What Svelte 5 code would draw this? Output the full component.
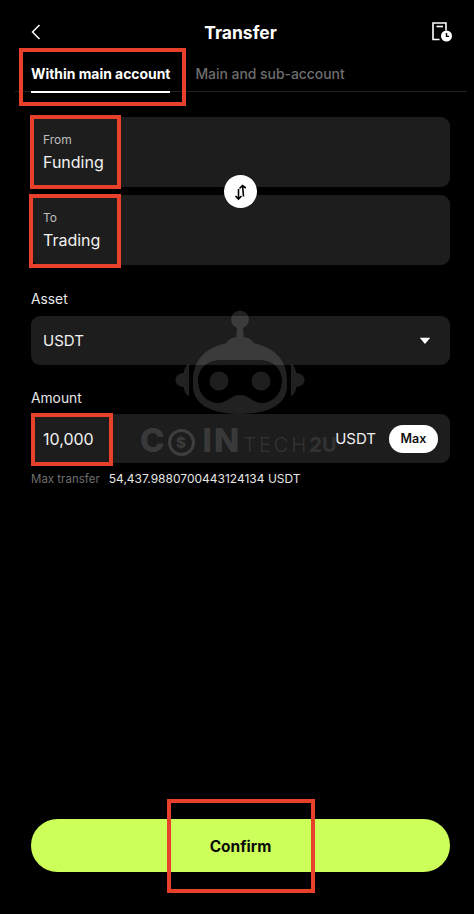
<script>
  let amount = '10,000';
  const maxTransfer = '54,437.9880700443124134 USDT';
</script>

<div class="page">
  <header class="topbar">
    <svg class="back" width="10" height="16" viewBox="0 0 10 16" fill="none"><path d="M8.500 1 1.500 8l7 7" stroke="#fff" stroke-width="1.500"/></svg>
    <h1>Transfer</h1>
    <svg class="history" width="22" height="22" viewBox="0 0 22 22" fill="none">
      <path d="M8.500 18.500H2V2h13v7.500" stroke="#fff" stroke-width="1.600"/>
      <path d="M5.500 5.500h6.500" stroke="#fff" stroke-width="1.600"/>
      <circle cx="15.500" cy="15" r="5.500" fill="#fff"/>
      <path d="M15.500 12v3.400h2.500" stroke="#000" stroke-width="1.400"/>
    </svg>
  </header>

  <nav class="tabs">
    <span class="tab active">Within main account</span>
    <span class="tab">Main and sub-account</span>
  </nav>

  <section class="accounts">
    <div class="card">
      <span class="small">From</span>
      <span class="value">Funding</span>
    </div>
    <div class="card">
      <span class="small">To</span>
      <span class="value">Trading</span>
    </div>
    <button class="swap" aria-label="Swap">
      <svg width="18" height="18" viewBox="0 0 18 18" fill="none" stroke="#000" stroke-width="1.600">
        <path d="M11.500 13.500 10.500 2.500M7.500 5.500l3-3 3.300 2.500"/>
        <path d="M6.500 6v10M3.500 13l3 3 3-3"/>
      </svg>
    </button>
  </section>

  <div class="field-label asset">Asset</div>
  <div class="select">
    <span class="value code">USDT</span>
    <svg width="12" height="8" viewBox="0 0 12 8"><path d="M.8.8h10.400L6 7z" fill="#fff"/></svg>
  </div>

  <div class="field-label amount">Amount</div>
  <div class="input">
    <span class="value">{amount}</span>
    <span class="unit">USDT</span>
    <span class="max">Max</span>
  </div>

  <p class="limit"><span class="limit-label">Max transfer</span><span>{maxTransfer}</span></p>

  <button class="confirm">Confirm</button>

  <!-- watermark sits over the form -->
  <div class="watermark">
    <svg class="robot" width="130" height="106" viewBox="0 0 130 106">
      <g fill="#fff">
        <circle cx="65" cy="9.500" r="9"/>
        <path d="M62.500 15h5l1.500 15h-8z"/>
        <path d="M50 37c1-7 6-10 15-10s14 3 15 10z"/>
        <path fill-rule="evenodd" d="M65 32c28 0 47 14 47 38v6c0 17-16 28-47 28s-47-11-47-28v-6c0-24 19-38 47-38zM45 50c-13 0-22 9-22 21s9 22 20 22c9 0 13-8 22-8s13 8 22 8c11 0 20-10 20-22s-9-21-22-21z"/>
        <circle cx="44" cy="71" r="9.500" opacity=".9"/>
        <circle cx="86" cy="71" r="9.500" opacity=".9"/>
        <path d="M14 54c-4 2-5 6-5 9-5 0-8.500 3-8.500 7s3.500 7 8.500 7c0 3 1 7 5 9z"/>
        <path d="M116 54c4 2 5 6 5 9 5 0 8.500 3 8.500 7s-3.500 7-8.500 7c0 3-1 7-5 9z"/>
      </g>
    </svg>
    <div class="wordmark">
      <b>C</b>
      <span class="coin">$</span>
      <b class="in">IN</b>
      <span class="tech">TECH</span>
      <b class="two">2U</b>
    </div>
  </div>

  <!-- red annotation boxes from the original screenshot -->
  <div class="mark m-tab"></div>
  <div class="mark m-from"></div>
  <div class="mark m-to"></div>
  <div class="mark m-amount"></div>
  <div class="mark m-confirm"></div>
</div>

<style>
  :global(body) {
    background: #000;
  }

  .page {
    position: relative;
    width: 474px;
    height: 914px;
    box-sizing: border-box;
    display: flex;
    flex-direction: column;
    padding-bottom: 42px;
    background: #000;
    color: #fff;
    font-family: Inter, "Liberation Sans", sans-serif;
    overflow: hidden;
  }

  .topbar {
    display: grid;
    grid-template-columns: 1fr auto 1fr;
    align-items: center;
    height: 32px;
    margin-top: 16px;
    padding: 0 21px 0 31px;
  }
  .topbar h1 {
    margin: 0 0 0 -3px;
    font-size: 17.500px;
    font-weight: 700;
  }
  .back {
    display: block;
  }
  .history {
    display: block;
    justify-self: end;
  }

  .tabs {
    display: flex;
    gap: 25px;
    margin: 0 7px 0 15px;
    padding: 9px 16px 0;
    border-bottom: 1px solid #1f1f1f;
    height: 34px;
  }
  .tab {
    font-size: 13.900px;
    font-weight: 500;
    color: #6e6e6e;
    line-height: 34px;
    height: 34px;
    white-space: nowrap;
  }
  .tab.active {
    color: #fff;
    font-weight: 700;
    border-bottom: 2px solid #fff;
  }

  .accounts {
    position: relative;
    display: flex;
    flex-direction: column;
    gap: 8px;
    margin: 25px 24px 0 31px;
  }
  .card {
    height: 70px;
    box-sizing: border-box;
    padding: 15px 12px 0;
    background: #1d1d1d;
    border-radius: 9px;
    display: flex;
    flex-direction: column;
    gap: 3px;
  }
  .small {
    font-size: 12px;
    line-height: 16px;
    color: #bdbdbd;
  }
  .value {
    font-size: 16px;
    line-height: 22px;
    color: #f2f2f2;
  }
  .value.code {
    font-size: 15px;
  }
  .swap {
    position: absolute;
    left: 193px;
    top: 58px;
    width: 33px;
    height: 33px;
    border: 0;
    padding: 0;
    border-radius: 50%;
    background: #fff;
    display: flex;
    align-items: center;
    justify-content: center;
  }

  .field-label {
    margin-left: 31px;
    font-size: 13.800px;
    line-height: 18px;
    color: #e8e8e8;
  }
  .asset {
    margin-top: 25px;
  }
  .amount {
    margin-top: 24px;
  }

  .select,
  .input {
    display: flex;
    align-items: center;
    height: 49px;
    margin: 8px 24px 0 31px;
    padding: 0 12px;
    background: #1d1d1d;
    border-radius: 9px;
  }
  .input {
    margin-top: 7px;
  }
  .select {
    justify-content: space-between;
    padding-right: 19px;
  }
  .input .value {
    flex: 1;
  }
  .unit {
    font-size: 15px;
    color: #efefef;
    margin-right: 13px;
  }
  .max {
    width: 49px;
    height: 28px;
    border-radius: 14px;
    background: #fff;
    color: #111;
    font-size: 12.500px;
    font-weight: 600;
    line-height: 28px;
    text-align: center;
  }

  .limit {
    margin: 8px 0 0 31px;
    font-size: 12px;
    line-height: 16px;
    color: #e6e6e6;
  }
  .limit-label {
    font-size: 11.500px;
    color: #6f6f6f;
    margin-right: 9px;
  }

  .confirm {
    margin: auto 24px 0 31px;
    height: 53px;
    padding: 2px 0 0;
    border: 0;
    border-radius: 27px;
    background: #ccff5a;
    color: #0a0a0a;
    font-family: inherit;
    font-size: 15.500px;
    font-weight: 700;
  }

  .watermark {
    position: absolute;
    left: 0;
    top: 0;
    pointer-events: none;
  }
  .robot {
    position: absolute;
    left: 175px;
    top: 310px;
    opacity: 0.13;
  }
  .wordmark {
    position: absolute;
    left: 140px;
    top: 421px;
    display: flex;
    align-items: baseline;
    white-space: nowrap;
    font-size: 33px;
    line-height: 38px;
    color: rgba(255, 255, 255, 0.15);
  }
  .wordmark b {
    font-weight: 800;
  }
  .wordmark .coin {
    align-self: center;
    width: 27px;
    height: 27px;
    box-sizing: border-box;
    margin-left: 3px;
    border: 3px solid rgba(255, 255, 255, 0.15);
    border-radius: 50%;
    font-size: 15px;
    font-weight: 800;
    line-height: 21px;
    text-align: center;
  }
  .wordmark .in {
    margin-left: 8px;
    letter-spacing: 2px;
  }
  .wordmark .tech {
    margin-left: 2px;
    font-size: 20px;
    font-weight: 300;
    letter-spacing: 3px;
    color: rgba(255, 255, 255, 0.11);
  }
  .wordmark .two {
    margin-left: 0;
    font-size: 20px;
    color: rgba(255, 255, 255, 0.09);
  }

  .mark {
    position: absolute;
    box-sizing: border-box;
    border: 4px solid #e8402a;
  }
  .m-tab {
    left: 19px;
    top: 48px;
    width: 167px;
    height: 58px;
  }
  .m-from {
    left: 30px;
    top: 115px;
    width: 91px;
    height: 74px;
  }
  .m-to {
    left: 29px;
    top: 194px;
    width: 92px;
    height: 74px;
  }
  .m-amount {
    left: 31px;
    top: 413px;
    width: 82px;
    height: 53px;
  }
  .m-confirm {
    left: 167px;
    top: 799px;
    width: 148px;
    height: 94px;
  }
</style>
